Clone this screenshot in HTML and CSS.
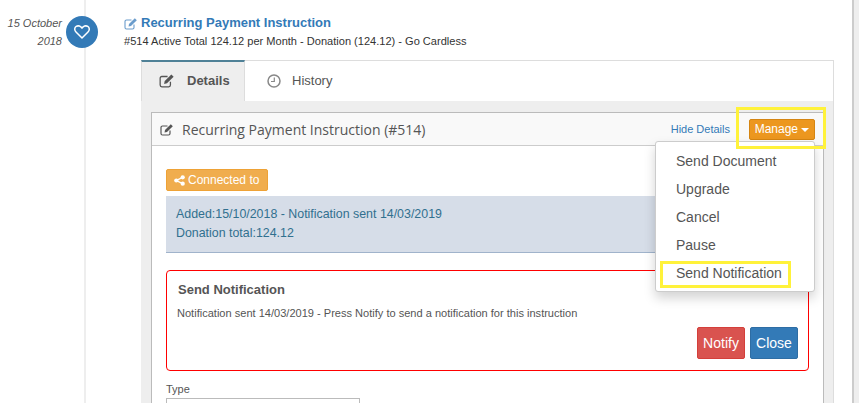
FILE: index.html
```html
<!DOCTYPE html>
<html lang="en">
<head>
<meta charset="utf-8">
<title>Recurring Payment Instruction</title>
<link rel="stylesheet" href="styles.css">
</head>
<body>
<div class="timeline">
  <div class="date"><em>15 October<br>2018</em></div>
  <div class="node">
    <svg viewBox="0 0 16 14" width="16" height="14"><path d="M8 13 L2 7 C0 5 .6 2.3 2.2 1.4 C4.2 .3 6.8 1 8 3.2 C9.2 1 11.8 .3 13.8 1.4 C15.4 2.3 16 5 14 7 Z" fill="none" stroke="#fff" stroke-width="1.5" stroke-linejoin="round"/></svg>
  </div>
  <div class="entry">
    <h4 class="entry-title">
      <svg class="edit-icon edit-light" viewBox="0 0 14 13" width="14" height="13"><path d="M10 7.500 V10.500 A1.500 1.500 0 0 1 8.500 12 H2.500 A1.500 1.500 0 0 1 1 10.500 V4.500 A1.500 1.500 0 0 1 2.500 3 H7.500" fill="none" stroke="currentColor" stroke-width="1.100"/><path d="M4.500 9.500 L5 7 L10.800 1.200 L12.800 3.200 L7 9 Z" fill="currentColor"/></svg>
      <span>Recurring Payment Instruction</span>
    </h4>
    <p class="entry-sub">#514 Active Total 124.12 per Month - Donation (124.12) - Go Cardless</p>
    <div class="tabs">
      <ul class="tab-list">
        <li class="tab tab-active">
          <svg class="edit-icon" viewBox="0 0 14 13" width="16" height="15"><path d="M10 7.500 V10.500 A1.500 1.500 0 0 1 8.500 12 H2.500 A1.500 1.500 0 0 1 1 10.500 V4.500 A1.500 1.500 0 0 1 2.500 3 H7.500" fill="none" stroke="currentColor" stroke-width="1.100"/><path d="M4.500 9.500 L5 7 L10.800 1.200 L12.800 3.200 L7 9 Z" fill="currentColor"/></svg>
          Details
        </li>
        <li class="tab">
          <svg viewBox="0 0 14 14" width="14" height="14"><circle cx="7" cy="7" r="6" fill="none" stroke="#888" stroke-width="1.500"/><path d="M7.300 3.500 V7.500 H4" fill="none" stroke="#888" stroke-width="1.200"/></svg>
          History
        </li>
      </ul>
      <div class="tab-body">
        <div class="panel">
          <div class="panel-heading">
            <svg class="edit-icon" viewBox="0 0 14 13" width="14" height="13"><path d="M10 7.500 V10.500 A1.500 1.500 0 0 1 8.500 12 H2.500 A1.500 1.500 0 0 1 1 10.500 V4.500 A1.500 1.500 0 0 1 2.500 3 H7.500" fill="none" stroke="currentColor" stroke-width="1.200"/><path d="M4.500 9.500 L5 7 L10.800 1.200 L12.800 3.200 L7 9 Z" fill="currentColor"/></svg>
            <span class="panel-title">Recurring Payment Instruction (#514)</span>
            <a class="hide-link">Hide Details</a>
            <button class="btn-manage">Manage <i class="caret"></i></button>
          </div>
          <div class="panel-body">
            <button class="btn-connected">
              <svg viewBox="0 0 12 12" width="11" height="11"><path d="M9.500 2.500 L2.500 6 L9.500 9.500" fill="none" stroke="#fff" stroke-width="1.500"/><circle cx="9.500" cy="2.500" r="2.300" fill="#fff"/><circle cx="2.500" cy="6" r="2.300" fill="#fff"/><circle cx="9.500" cy="9.500" r="2.300" fill="#fff"/></svg>
              Connected to
            </button>
            <div class="info"><p class="info-line">Added:15/10/2018 - Notification sent 14/03/2019</p><p class="info-line">Donation total:124.12</p></div>
            <div class="notice">
              <h5 class="notice-title">Send Notification</h5>
              <p class="notice-text">Notification sent 14/03/2019 - Press Notify to send a notification for this instruction</p>
              <div class="notice-actions">
                <button class="btn btn-red">Notify</button>
                <button class="btn btn-blue">Close</button>
              </div>
            </div>
            <label class="field-label">Type</label>
            <div class="field-input"></div>
          </div>
        </div>
      </div>
    </div>
  </div>
  <div class="edge"></div>
</div>
<ul class="menu">
  <li>Send Document</li>
  <li>Upgrade</li>
  <li>Cancel</li>
  <li>Pause</li>
  <li>Send Notification</li>
</ul>
<div class="mark mark-manage"></div>
<div class="mark mark-send"></div>
</body>
</html>
```
FILE: styles.css
```css
* { box-sizing: border-box; }
html, body { margin: 0; height: 403px; overflow: hidden; }
body { position: relative; background: #fff; font-family: "Liberation Sans", Arial, sans-serif; color: #333; font-size: 14px; }
.timeline { display: flex; align-items: flex-start; height: 403px; padding-top: 14px; position: relative; overflow: hidden; }
.timeline::before { content: ""; position: absolute; left: 84px; top: 0; bottom: 0; width: 2px; background: #eee; }
.date { width: 62px; text-align: right; font-size: 11px; line-height: 18px; color: #555; flex: none; }
.node { flex: none; position: relative; width: 32px; height: 32px; margin: 2px 0 0 4px; border-radius: 50%; background: #337ab7; display: flex; align-items: center; justify-content: center; }
.entry { flex: none; margin-left: 26px; width: 710px; }
.entry-title { margin: 1px 0 0; font-size: 13px; line-height: 16px; font-weight: bold; color: #337ab7; display: flex; align-items: center; gap: 3px; }
.edit-light { color: #6a9ccc; }
.entry-sub { margin: 3px 0 0; font-size: 11.060px; line-height: 15px; color: #333; }
.edit-icon { flex: none; }
.tabs { margin: 11px 0 0 17px; width: 693px; }
.tab-list { display: flex; list-style: none; margin: 0; padding: 0 0 0 1px; height: 41px; border: 1px solid #ddd; border-bottom: 0; border-left: 0; }
.tab { display: flex; align-items: center; gap: 11px; padding: 0 22px 2px; height: 41px; color: #555; font-size: 13px; }
.tab-active { width: 104px; margin-left: -1px; margin-top: -1px; gap: 12px; padding: 0 0 3px 17px; background: #eee; border-top: 2px solid #4f8197; border-left: 1px solid #ddd; border-right: 1px solid #ddd; font-weight: bold; color: #555; }
.tab-body { background: #eee; height: 310px; padding: 11px 9px 0 10px; border-right: 1px solid #ddd; }
.panel { border: 1px solid #bbb; background: #fff; height: 400px; }
.panel-heading { height: 33px; background: #f9f9f9; border-bottom: 1px solid #ccc; display: flex; align-items: center; padding-left: 8px; gap: 8px; color: #555; }
.panel-title { font-family: "Open Sans", sans-serif; font-size: 14px; flex: 1; color: #555; }
.hide-link { font-size: 11px; color: #337ab7; }
.btn-manage { width: 66px; height: 21px; margin: 0 8px 0 11px; padding: 0; border: 1px solid #d58512; border-radius: 2px; background: #ec971f; color: #fff; font: 12px "Liberation Sans", sans-serif; }
.caret { display: inline-block; vertical-align: middle; border: 4px solid transparent; border-top-color: #fff; border-bottom: 0; }
.panel-body { padding: 23px 14px 0; }
.btn-connected { display: flex; align-items: center; gap: 3px; width: 102px; height: 22px; padding: 0 0 0 7px; border: 1px solid #eea236; border-radius: 2px; background: #f0ad4e; color: #fff; font: 12px "Liberation Sans", sans-serif; }
.info { margin-top: 5px; height: 57px; padding: 9px 10px; background: #d6dde8; border-bottom: 1px solid #a0b3cb; color: #31708f; font-size: 12.400px; line-height: 18px; }
.info-line { margin: 0; }
.info-line + .info-line { margin-top: 1px; }
.notice { margin-top: 17px; width: 643px; height: 101px; padding: 10px 11px; border: 1px solid #f00; border-radius: 4px; position: relative; }
.notice-title { margin: 1px 0 0; font-size: 13px; line-height: 16px; color: #555; }
.notice-text { margin: 8px 0 0 -1px; font-size: 11.060px; line-height: 15px; color: #555; }
.notice-actions { display: flex; gap: 5px; justify-content: flex-end; position: absolute; right: 10px; top: 56px; }
.btn { width: 48px; height: 32px; padding: 0; border-radius: 2px; color: #fff; font: 14px "Liberation Sans", sans-serif; }
.btn-red { background: #d9534f; border: 1px solid #d43f3a; }
.btn-blue { background: #337ab7; border: 1px solid #2e6da4; }
.field-label { display: block; margin-top: 11px; font-size: 11px; line-height: 14px; color: #555; }
.field-input { margin-top: 2px; width: 194px; height: 34px; border: 1px solid #bbb; }
.edge { position: absolute; left: 852px; top: 0; right: 0; bottom: 0; background: #eee; border-left: 2px solid #ccc; }
.menu { position: absolute; left: 655px; top: 141px; width: 160px; height: 151px; margin: 0; padding: 5px 0; list-style: none; background: #fff; border: 1px solid #ccc; border-radius: 3px; box-shadow: 0 6px 12px rgba(0,0,0,.175); }
.menu li { height: 28px; line-height: 28px; padding-left: 20px; font-size: 14px; color: #555; }
.mark { position: absolute; border: 3px solid #fff23a; }
.mark-manage { left: 736px; top: 107px; width: 90px; height: 42px; }
.mark-send { left: 660px; top: 261px; width: 131px; height: 27px; }
```
